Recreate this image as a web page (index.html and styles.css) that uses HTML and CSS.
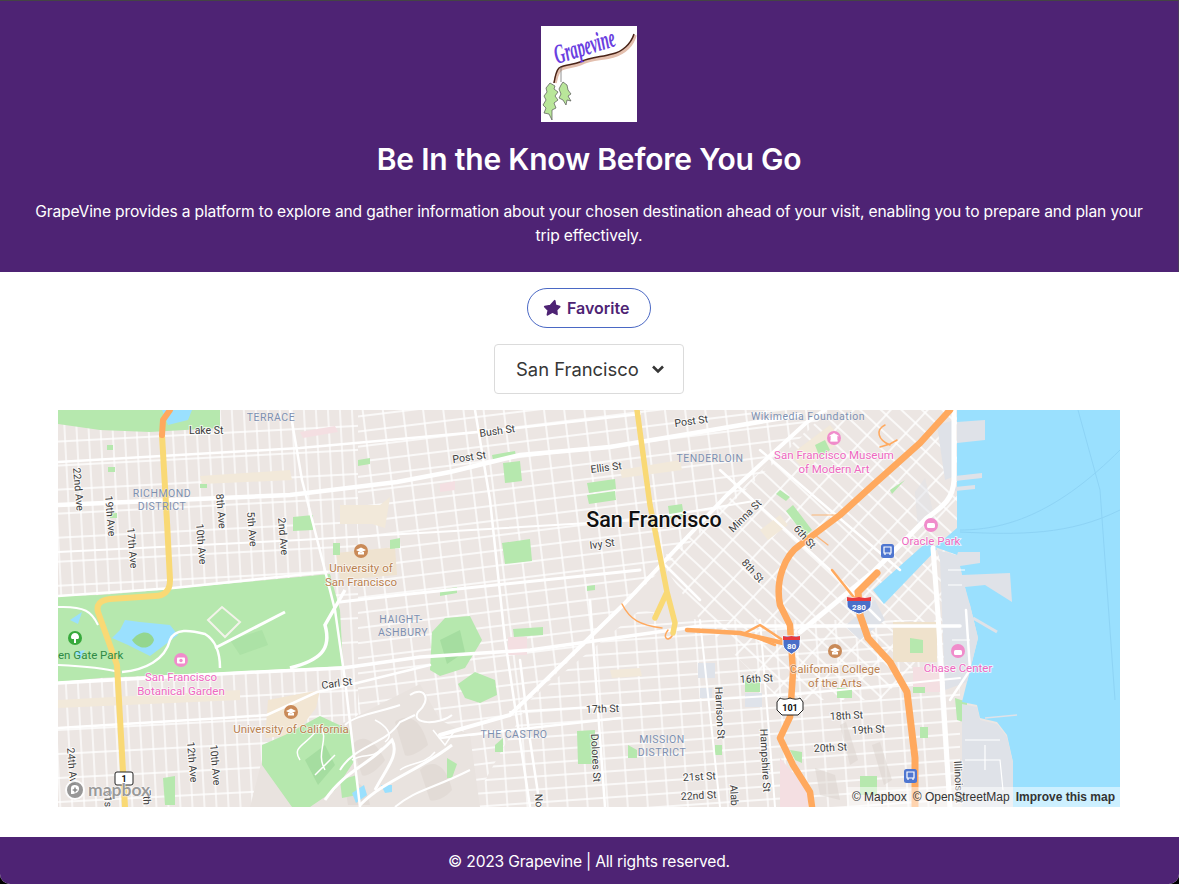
FILE: index.html
```html
<!DOCTYPE html>
<html lang="en">

<head>
    <meta charset="UTF-8">
    <meta name="viewport" content="width=device-width, initial-scale=1.0">
    <title>Grapevine</title>
    <link rel="stylesheet" href="styles.css">
</head>

<body>
    <div class="page">
        <header class="hero">
            <!-- logo -->
            <svg class="logo" viewBox="0 0 96 96" aria-label="Grapevine logo">
                <rect width="96" height="96" fill="#fff" />
                <path d="M94 9C91 20 82 27 72 30C62 33 50 32 39 38C32 41 24 40 19 44C16 47 15 52 14 57" fill="none" stroke="#e3bfae" stroke-width="3.500" />
                <path d="M93 8C90 18 81 26 71 28C61 31 50 31 39 36C32 39 24 38 18 42C15 45 14 51 13 57" fill="none" stroke="#4a2417" stroke-width="1.500" />
                <path d="M20 41V56" fill="none" stroke="#777" stroke-width=".8" />
                <path d="M9 57L14 60L13 63L17 66L14 70L17 74L13 77L15 82L11 84L11 94L8 88L3 87L5 82L2 79L5 74L3 70L6 66L5 62Z" fill="#b9e69a" stroke="#555" stroke-width=".7" />
                <path d="M22 56L26 59L27 64L30 68L27 70L30 75L26 74L25 79L22 74L18 72L20 68L18 63L20 59Z" fill="#b9e69a" stroke="#555" stroke-width=".7" />
                <text class="logo-word" transform="translate(16 38) rotate(-17) scale(.7 1.300)">Grapevine</text>
            </svg>
            <h1 class="hero-title">Be In the Know Before You Go</h1>
            <p class="hero-text">GrapeVine provides a platform to explore and gather information about your chosen destination ahead of your visit, enabling you to prepare and plan your trip effectively.</p>
        </header>

        <main class="content">
            <button class="fav-btn">
                <svg class="fav-icon" viewBox="0 0 20 20">
                    <path d="M13 2L13.800 7L18.500 8.500L15 12L15.500 17L10.500 14.500L5 17.500L6 12.500L2 8.500L8 7.500Z" fill="#4e2374" stroke="#4e2374" stroke-width="2" stroke-linejoin="round" />
                </svg>
                Favorite
            </button>

            <div class="city-select">
                <span>San Francisco</span>
                <svg class="chevron" viewBox="0 0 14 10">
                    <path d="M2 2.500L7 7.500L12 2.500" fill="none" stroke="#363636" stroke-width="2.600" />
                </svg>
            </div>

            <div class="map">
                <svg class="map-svg" viewBox="58 410 1062 397" preserveAspectRatio="none">
                    <defs>
                        <pattern id="grid-west" width="12" height="24" patternUnits="userSpaceOnUse" patternTransform="rotate(-3)">
                            <path d="M6 0V24M0 12H12" stroke="#fff" stroke-width="1.300" />
                        </pattern>
                        <pattern id="grid-mid" width="20" height="15" patternUnits="userSpaceOnUse" patternTransform="rotate(-7)">
                            <path d="M10 0V15M0 7H20" stroke="#fff" stroke-width="1.400" />
                        </pattern>
                        <pattern id="grid-soma" width="27" height="14" patternUnits="userSpaceOnUse" patternTransform="rotate(43)">
                            <path d="M13 0V14M0 7H27" stroke="#fff" stroke-width="1.500" />
                        </pattern>
                        <pattern id="grid-south" width="20" height="13" patternUnits="userSpaceOnUse" patternTransform="rotate(-4)">
                            <path d="M10 0V13M0 6H20" stroke="#fff" stroke-width="1.300" />
                        </pattern>
                    </defs>

                    <!-- land and street texture -->
                    <rect x="58" y="410" width="1062" height="397" fill="#ece6e3" />
                    <rect x="58" y="410" width="300" height="397" fill="url(#grid-west)" />
                    <path d="M358 410H830L640 590L530 700L470 807H358Z" fill="url(#grid-mid)" />
                    <path d="M660 560L830 410H960V620L880 700H780L700 620Z" fill="url(#grid-soma)" />
                    <path d="M470 807L530 700L640 610L700 620H960V807Z" fill="url(#grid-south)" />

                    <!-- hills replace the grid -->
                    <path d="M345 722L420 684L440 720L470 735L480 807H250L262 760Z" fill="#e9e3df" />
                    <g fill="#dcd4ce" opacity=".5">
                        <path d="M352 745C360 735 372 735 385 760C378 770 366 778 362 775Z" />
                        <path d="M395 722C405 714 420 715 428 745C420 752 408 758 405 755Z" />
                        <path d="M420 770C430 760 445 760 452 790C445 798 435 802 430 800Z" />
                        <path d="M345 785C352 778 365 780 370 805H348Z" />
                        <path d="M840 725L846 722L858 760L850 765Z" />
                        <path d="M872 745L880 742L892 780L884 785Z" />
                        <path d="M815 768L835 775L840 800L820 795Z" />
                    </g>

                    <!-- tan blocks -->
                    <g fill="#f2e9da">
                        <path d="M340 505H380L390 497L385 528L372 524H340Z" />
                        <path d="M336 553L395 547L397 575L340 580Z" fill="#efe3d0" />
                        <path d="M200 476L290 470L292 480L202 484Z" />
                        <path d="M268 700L320 690L316 708L295 735L265 738Z" fill="#f2e6d3" />
                        <path d="M58 700L240 690L240 700L58 708Z" />
                        <path d="M620 470L680 460L682 470L622 478Z" />
                        <path d="M893 622H937V662H893Z" fill="#efe2cc" />
                        <path d="M790 455L830 425L842 440L805 470Z" />
                        <path d="M760 530L780 515L788 525L768 540Z" />
                        <path d="M610 670L640 668L642 676L612 678Z" />
                    </g>
                    <g fill="#f4dfe2">
                        <path d="M508 637H527V655H508Z" />
                        <path d="M913 667H940V692H913Z" />
                        <path d="M780 758L808 790V807H780Z" />
                        <path d="M300 432L335 426L338 432L303 438Z" />
                        <path d="M440 484L455 481V490L440 492Z" />
                    </g>
                    <g fill="#dfe3ea">
                        <path d="M698 663H715V678H698Z" />
                        <path d="M745 693H762V707H745Z" />
                        <path d="M700 688H712V698H700Z" />
                    </g>

                    <!-- parks -->
                    <g fill="#b6e8ae">
                        <path d="M58 410H220V428L150 432L100 430L58 424Z" />
                        <path d="M58 596L100 595L160 590L330 574L340 610L343 666L230 672L100 678L58 682Z" />
                        <path d="M285 735L320 716L350 730L355 760L335 790L310 807H292L262 765L262 745Z" />
                        <path d="M432 632L445 618L470 616L482 640L465 668L440 676L430 670Z" />
                        <path d="M458 684L475 672L495 680L497 695L480 703L465 698Z" />
                        <path d="M163 778L175 776V805L165 805Z" />
                        <path d="M340 780L357 775V795L342 798Z" />
                        <path d="M503 463L520 461L522 481L505 483Z" />
                        <path d="M587 483L615 479L616 489L589 493Z" />
                        <path d="M587 495L615 491L616 500L589 504Z" />
                        <path d="M668 506L682 504L684 517L670 519Z" />
                        <path d="M502 543L530 539L532 561L505 564Z" />
                        <path d="M492 455L515 451L516 456L493 460Z" />
                        <path d="M440 590L457 587V593L440 596Z" />
                        <path d="M587 586L595 585V590L587 591Z" />
                        <path d="M293 517L313 515V530L293 531Z" />
                        <path d="M333 543H340V555H333Z" />
                        <path d="M390 540L400 538V548L390 549Z" />
                        <path d="M358 460L370 458V464L358 466Z" />
                        <path d="M107 445H113V450H107Z" />
                        <path d="M108 467H115V472H108Z" />
                        <path d="M200 484H207V488H200Z" />
                        <path d="M110 513H117V518H110Z" />
                        <path d="M577 731L595 730V764H578Z" />
                        <path d="M513 629L543 627V635L514 637Z" />
                        <path d="M495 745L503 738V752H495Z" />
                        <path d="M628 745L637 750V758H628Z" />
                        <path d="M745 680H760V692H745Z" />
                        <path d="M715 745H722V755H715Z" />
                        <path d="M790 750L802 752V763L795 760Z" />
                        <path d="M447 758L457 764L452 778H447Z" />
                        <path d="M910 638L923 640V653H910Z" />
                        <path d="M837 688H852V698H837Z" />
                        <path d="M913 687H925V693H913Z" />
                        <path d="M920 727H928V738H920Z" />
                        <path d="M860 776H877V795H860Z" />
                        <path d="M955 698L967 702V723L957 720Z" />
                        <path d="M793 505L812 530L805 536L786 511Z" />
                        <path d="M780 490L790 497L786 501L776 494Z" />
                        <path d="M815 445L825 440L830 450L820 458Z" />
                        <path d="M890 490L905 480L902 483L892 494Z" />
                    </g>
                    <g fill="#a5dda0">
                        <path d="M305 760L325 745L335 765L318 785Z" />
                        <path d="M440 640L460 630L465 652L447 664Z" />
                        <path d="M230 640L262 630L268 645L240 655Z" opacity=".6" />
                    </g>

                    <!-- water -->
                    <g fill="#9ae0fe">
                        <path d="M957 410H1120V807H1013V762L1007 735L997 722L980 718L977 705L962 702L967 682L978 638L970 605L968 600L957 555L935 547L957 528Z" />
                        <path d="M162 410H192L188 420L168 425Z" />
                        <path d="M125 620L140 622L170 625L178 635L158 650L150 656L128 645L112 638L120 630Z" />
                        <path d="M873 590L928 541L937 549L884 604Z" />
                        <path d="M352 793L364 785L367 795L356 803Z" />
                        <path d="M381 785H392V792L385 793Z" />
                        <path d="M70 620L82 612L78 624Z" />
                        <path d="M75 652L85 650L80 660Z" />
                    </g>
                    <path d="M132 640C142 628 152 632 154 640C152 648 140 652 132 640Z" fill="#94d68f" />
                    <path d="M1078 410L1100 490L1105 560L1115 700M1120 450C1060 510 1010 530 960 530M960 532C1020 535 1070 535 1120 510" fill="none" stroke="#8dd3f5" stroke-width="1" />

                    <!-- piers and port land -->
                    <g fill="#dfe2e8">
                        <path d="M957 422L985 420L985 440L957 443Z" />
                        <path d="M955 476L982 473L982 478L955 481Z" />
                        <path d="M955 487L975 485L975 489L955 491Z" />
                        <path d="M937 425L955 420V476L945 480Z" />
                        <path d="M937 550L957 555L958 552L980 552L980 563L960 566L962 575L1010 573L1012 602L985 585L965 587L970 605L978 638L967 682L945 690L940 560Z" />
                        <path d="M962 704L977 707L980 720L997 724L1007 737L1013 763V807H962Z" />
                        <path d="M915 492L925 478L935 520L918 530Z" opacity=".5" />
                        <path d="M845 626L875 600L885 620L860 640Z" />
                    </g>
                    <path d="M973 618L997 632" stroke="#dfe2e8" stroke-width="3" />
                    <path d="M985 718L1017 715" stroke="#dfe2e8" stroke-width="1.500" />
                    <g fill="none" stroke="#fff" stroke-width="1.200">
                        <path d="M948 570H965M948 585H962M952 640H970" />
                        <path d="M965 740H1000M965 760H1000L1003 790M985 745V770" />
                    </g>

                    <!-- curved hill roads -->
                    <g fill="none" stroke="#fff" stroke-width="2">
                        <path d="M58 607C85 606 92 612 98 625M58 665C80 666 105 668 118 672" />
                        <path d="M122 672C145 670 165 660 170 640C175 628 190 630 205 634C215 640 220 650 220 668" stroke-width="2.500" />
                        <path d="M215 648L285 612" stroke-width="3" />
                        <path d="M290 668C320 660 332 650 325 625L345 590" stroke-width="3.500" />
                        <path d="M345 725C355 715 380 712 400 705M340 770C355 745 385 745 400 722L415 715" />
                        <path d="M325 800C345 770 370 765 392 740C400 755 385 770 375 790" stroke-width="3" />
                        <path d="M360 805C385 780 420 770 452 745" stroke-width="3" />
                        <path d="M395 807C415 790 430 790 470 770" />
                        <path d="M410 695C425 685 432 700 418 712C410 725 440 725 452 715" />
                        <path d="M352 760C365 752 372 760 382 748M400 770C410 762 425 765 435 752M375 720C385 725 395 735 385 742" stroke-width="1.500" />
                        <path d="M300 760C290 745 310 745 320 725C330 740 315 752 325 770M315 775L335 755" stroke-width="1.500" />
                        <path d="M433 730L445 745L455 730" stroke-width="1.500" />
                        <path d="M208 620L222 607L240 622L225 637Z" stroke="#f3f3ea" stroke-width="2" />
                    </g>

                    <!-- main streets -->
                    <g fill="none" stroke="#fff" stroke-linecap="round">
                        <path d="M58 505L290 495L397 482L450 472L520 455L610 447L700 432L800 415" stroke-width="4.500" />
                        <path d="M58 462L300 448L500 430L640 414" stroke-width="2.500" />
                        <path d="M58 552L300 540L640 520L760 500" stroke-width="2" />
                        <path d="M58 596L173 588L327 572" stroke-width="2.500" />
                        <path d="M58 683L237 673L343 668L420 657L530 650L700 626H960" stroke-width="3.500" />
                        <path d="M58 728L223 718L267 715L317 692L357 683L430 665" stroke-width="2.500" />
                        <path d="M340 602L400 595L640 570" stroke-width="3" />
                        <path d="M440 735L510 715L623 605L727 495L807 422L825 410" stroke-width="4" />
                        <path d="M510 712L800 694L960 678" stroke-width="2" />
                        <path d="M440 738L620 718" stroke-width="2.500" />
                        <path d="M290 410L302 480L335 610L345 680L360 807" stroke-width="2.500" />
                        <path d="M475 410L490 500L505 640L530 807" stroke-width="2.500" />
                        <path d="M590 600L605 807" stroke-width="2.500" />
                        <path d="M520 660L530 740L540 807" stroke-width="2.500" />
                        <path d="M700 620L720 807" stroke-width="2" />
                        <path d="M760 620L775 807" stroke-width="2" />
                        <path d="M954 410V480C953 498 945 505 927 518L873 572L800 632" stroke-width="5" />
                        <path d="M933 548L938 615L950 807" stroke-width="5" />
                        <path d="M966 610L970 670L950 700" stroke-width="2.500" />
                        <path d="M720 470L830 570L880 620M660 560L700 600M760 450L900 570" stroke-width="2.500" />
                    </g>

                    <!-- highways -->
                    <g fill="none" stroke-linecap="round" stroke-linejoin="round">
                        <path d="M162 435L167 522L170 580C170 592 163 596 155 596L110 599C100 600 96 605 98 612L117 665L125 807" stroke="#f9d975" stroke-width="6" />
                        <path d="M637 410L650 505L667 592L655 618M667 592L675 623L673 633" stroke="#f9d975" stroke-width="5.500" />
                        <path d="M162 435L163 420L170 410" stroke="#ffa95e" stroke-width="6" />
                        <path d="M950 410L920 443L873 485L840 515L800 545C785 555 775 580 780 605L790 625L793 672L790 717L780 738L793 765L810 792L812 807" stroke="#ffa95e" stroke-width="6.500" />
                        <path d="M687 630L740 633L783 643" stroke="#ffa95e" stroke-width="4.500" />
                        <path d="M745 633L760 625L790 645M755 637L775 645" stroke="#ffa95e" stroke-width="2.500" />
                        <path d="M877 573L858 592L860 615L868 638L890 662L907 692L915 758V807" stroke="#ffa95e" stroke-width="7" />
                        <path d="M832 570L856 600" stroke="#ffa95e" stroke-width="2.500" />
                        <path d="M622 604C630 620 640 625 662 628" stroke="#ffa95e" stroke-width="1.500" />
                        <path d="M668 630C662 638 668 642 672 636" stroke="#ffa95e" stroke-width="1.500" />
                        <path d="M880 447L890 444L897 440M885 425C875 430 878 440 890 445" stroke="#ffa95e" stroke-width="1.500" />
                        <path d="M828 545L815 535M812 515L840 515" stroke="#ffa95e" stroke-width="1.200" opacity=".8" />
                    </g>

                    <!-- area labels -->
                    <g class="lbl-area">
                        <text x="271" y="421" text-anchor="middle">TERRACE</text>
                        <text x="162" y="497" text-anchor="middle">RICHMOND</text>
                        <text x="162" y="510" text-anchor="middle">DISTRICT</text>
                        <text x="401" y="623" text-anchor="middle">HAIGHT-</text>
                        <text x="403" y="636" text-anchor="middle">ASHBURY</text>
                        <text x="710" y="462" text-anchor="middle">TENDERLOIN</text>
                        <text x="514" y="738" text-anchor="middle">THE CASTRO</text>
                        <text x="662" y="743" text-anchor="middle">MISSION</text>
                        <text x="662" y="756" text-anchor="middle">DISTRICT</text>
                        <text x="808" y="420" text-anchor="middle">Wikimedia Foundation</text>
                    </g>

                    <!-- street labels -->
                    <g class="lbl-street">
                        <text transform="translate(189 434)">Lake St</text>
                        <text transform="translate(480 437) rotate(-8)">Bush St</text>
                        <text transform="translate(453 463) rotate(-8)">Post St</text>
                        <text transform="translate(675 427) rotate(-8)">Post St</text>
                        <text transform="translate(591 473) rotate(-7)">Ellis St</text>
                        <text transform="translate(590 549) rotate(-7)">Ivy St</text>
                        <text transform="translate(733 533) rotate(-45)">Minna St</text>
                        <text transform="translate(793 529) rotate(48)">6th St</text>
                        <text transform="translate(741 563) rotate(48)">8th St</text>
                        <text transform="translate(73 468) rotate(85)">22nd Ave</text>
                        <text transform="translate(105 496) rotate(85)">19th Ave</text>
                        <text transform="translate(127 528) rotate(85)">17th Ave</text>
                        <text transform="translate(196 524) rotate(85)">10th Ave</text>
                        <text transform="translate(216 494) rotate(85)">8th Ave</text>
                        <text transform="translate(247 512) rotate(85)">5th Ave</text>
                        <text transform="translate(278 518) rotate(85)">2nd Ave</text>
                        <text transform="translate(322 689) rotate(-8)">Carl St</text>
                        <text transform="translate(67 748) rotate(85)">24th Ave</text>
                        <text transform="translate(187 742) rotate(85)">12th Ave</text>
                        <text transform="translate(210 745) rotate(85)">10th Ave</text>
                        <text transform="translate(586 713) rotate(-2)">17th St</text>
                        <text transform="translate(591 734) rotate(87)">Dolores St</text>
                        <text transform="translate(715 687) rotate(87)">Harrison St</text>
                        <text transform="translate(760 729) rotate(87)">Hampshire St</text>
                        <text transform="translate(740 683) rotate(-3)">16th St</text>
                        <text transform="translate(830 720) rotate(-3)">18th St</text>
                        <text transform="translate(852 734) rotate(-3)">19th St</text>
                        <text transform="translate(814 752) rotate(-3)">20th St</text>
                        <text transform="translate(683 781) rotate(-3)">21st St</text>
                        <text transform="translate(681 800) rotate(-3)">22nd St</text>
                        <text transform="translate(535 794) rotate(87)">No</text>
                        <text transform="translate(730 785) rotate(87)">Alab</text>
                        <text transform="translate(954 761) rotate(87)">Illinois St</text>
                        <text transform="translate(104 790) rotate(88)">21s</text>
                        <text transform="translate(143 790) rotate(88)">7th</text>
                    </g>

                    <text class="lbl-city" x="654" y="527" text-anchor="middle">San Francisco</text>

                    <!-- pink pois -->
                    <g class="lbl-pink">
                        <text x="834" y="459" text-anchor="middle">San Francisco Museum</text>
                        <text x="834" y="473" text-anchor="middle">of Modern Art</text>
                        <text x="931" y="545" text-anchor="middle">Oracle Park</text>
                        <text x="958" y="672" text-anchor="middle">Chase Center</text>
                        <text x="181" y="681" text-anchor="middle">San Francisco</text>
                        <text x="181" y="695" text-anchor="middle">Botanical Garden</text>
                    </g>
                    <g class="lbl-brown">
                        <text x="361" y="572" text-anchor="middle">University of</text>
                        <text x="361" y="586" text-anchor="middle">San Francisco</text>
                        <text x="291" y="733" text-anchor="middle">University of California</text>
                        <text x="835" y="673" text-anchor="middle">California College</text>
                        <text x="835" y="687" text-anchor="middle">of the Arts</text>
                    </g>
                    <text class="lbl-park" x="58" y="659">en Gate Park</text>

                    <!-- poi icons -->
                    <g>
                        <circle cx="834" cy="438" r="7" fill="#f08ccb" />
                        <path d="M830 441H838M831 436H837V441H831ZM829.500 436L834 433.500L838.500 436" fill="#fff" stroke="#fff" stroke-width=".8" />
                        <circle cx="931" cy="525" r="7" fill="#f08ccb" />
                        <rect x="927" y="523" width="8" height="5" rx="1.500" fill="#fff" />
                        <circle cx="958" cy="651" r="7" fill="#f08ccb" />
                        <rect x="954" y="650" width="8" height="5" rx="1.500" fill="#fff" />
                        <circle cx="181" cy="660" r="7" fill="#f08ccb" />
                        <rect x="177" y="657.500" width="8" height="6" rx="1" fill="#fff" />
                        <circle cx="181" cy="660.500" r="1.700" fill="#f08ccb" />
                        <circle cx="361" cy="551" r="7" fill="#c98a58" />
                        <path d="M356 550L361 547.500L366 550L361 552.500ZM358 552V554.500H364V552" fill="#fff" />
                        <circle cx="291" cy="712" r="7" fill="#c98a58" />
                        <path d="M286 711L291 708.500L296 711L291 713.500ZM288 713V715.500H294V713" fill="#fff" />
                        <circle cx="835" cy="651" r="7" fill="#c98a58" />
                        <path d="M830 650L835 647.500L840 650L835 652.500ZM832 652V654.500H838V652" fill="#fff" />
                        <circle cx="75" cy="638" r="7" fill="#37a93c" />
                        <path d="M75 633C79 633 80 638 78 639H76V643H74V639H72C70 638 71 633 75 633Z" fill="#fff" />
                        <rect x="881" y="544" width="13" height="14" rx="2.500" fill="#4f76d0" />
                        <path d="M884 547H891V553H884ZM885 553V555M890 553V555" fill="none" stroke="#fff" stroke-width="1.200" />
                        <rect x="904" y="769" width="13" height="14" rx="2.500" fill="#4f76d0" />
                        <path d="M907 772H914V778H907ZM908 778V780M913 778V780" fill="none" stroke="#fff" stroke-width="1.200" />
                    </g>

                    <!-- highway shields -->
                    <g>
                        <path d="M783 636H800V644C800 649 795 652 791.500 654C788 652 783 649 783 644Z" fill="#4a6fc8" stroke="#fff" stroke-width="1" />
                        <path d="M783 636L787 637L791.500 636L796 637L800 636V640H783Z" fill="#e8383d" />
                        <text class="lbl-shield" x="791.500" y="649" text-anchor="middle">80</text>
                        <path d="M847 598H871V605C871 609 865 612 859 614C853 612 847 609 847 605Z" fill="#4a6fc8" stroke="#fff" stroke-width="1" />
                        <path d="M847 597L853 598L859 597L865 598L871 597V601H847Z" fill="#e8383d" />
                        <text class="lbl-shield" x="859" y="610" text-anchor="middle">280</text>
                        <path d="M780 698C784 700 787 699 790 698C793 699 797 700 800 698L803 702V710L798 715H782L777 710V702Z" fill="#fff" stroke="#222" stroke-width="1" />
                        <text class="lbl-shield-dark" x="790" y="711" text-anchor="middle">101</text>
                        <rect x="115" y="772" width="18" height="13" rx="2" fill="#fff" stroke="#222" stroke-width="1" />
                        <text class="lbl-shield-dark" x="124" y="782" text-anchor="middle">1</text>
                    </g>
                </svg>

                <!-- mapbox badge + attribution -->
                <div class="mapbox-logo">
                    <svg class="mapbox-mark" viewBox="0 0 22 22">
                        <circle cx="11" cy="11" r="9" fill="#8f8f8f" stroke="#fff" stroke-width="2" opacity=".9" />
                        <path d="M7 15V9C7 6 11 5 14 7C16 9 15 13 12 14C10 15 8 15 7 15Z" fill="#fff" />
                        <path d="M11 7.500L12 10L14 11L12 12L11 14L10 12L8 11L10 10Z" fill="#8f8f8f" />
                    </svg>
                    <span>mapbox</span>
                </div>
                <div class="attrib">
                    <span>© Mapbox</span>
                    <span>© OpenStreetMap</span>
                    <strong>Improve this map</strong>
                </div>
            </div>
        </main>

        <footer class="foot">© 2023 Grapevine | All rights reserved.</footer>
    </div>
</body>

</html>
```

FILE: styles.css
```css
:root {
    --purple: #4e2374;
}

html,
body {
    height: 100%;
    margin: 0;
    background-color: #000;
}

body {
    font-family: 'Inter', 'Liberation Sans', sans-serif;
    color: #fff;
}

.page {
    height: 884px;
    display: flex;
    flex-direction: column;
    overflow: hidden;
    border-radius: 0 0 10px 10px;
    background-color: #fff;
}

/* Header */
.hero {
    height: 246px;
    border-top: 1px solid #444;
    border-right: 1px solid #4a3a5c;
    padding-top: 25px;
    background-color: var(--purple);
    text-align: center;
}

.logo {
    display: block;
    width: 96px;
    height: 96px;
    margin: 0 auto;
}

.logo-word {
    font-family: 'Liberation Serif', serif;
    font-style: italic;
    font-weight: 700;
    font-size: 21px;
    fill: #6a3fe0;
}

.hero-title {
    margin: 19px 0 0;
    font-size: 30px;
    font-weight: 600;
    letter-spacing: -0.2px;
    line-height: 36px;
}

.hero-text {
    margin: 23px 34px 0;
    font-size: 15.6px;
    letter-spacing: -0.15px;
    line-height: 24px;
}

/* Favorite + select */
.content {
    flex: 1;
    display: flex;
    flex-direction: column;
    align-items: center;
    padding: 16px 1px 0 0;
}

.fav-btn {
    display: flex;
    align-items: center;
    gap: 6px;
    box-sizing: border-box;
    width: 124px;
    height: 40px;
    padding: 0 0 0 15px;
    border: 1px solid #4a68c4;
    border-radius: 20px;
    background-color: #fff;
    color: var(--purple);
    font-family: inherit;
    font-size: 16px;
    font-weight: 600;
}

.fav-icon {
    width: 18px;
    height: 18px;
}

.city-select {
    display: flex;
    align-items: center;
    justify-content: space-between;
    box-sizing: border-box;
    width: 190px;
    height: 50px;
    margin-top: 16px;
    padding: 0 18px 0 21px;
    border: 1px solid #dbdbdb;
    border-radius: 4px;
    color: #363636;
    font-size: 18.4px;
}

.chevron {
    width: 14px;
    height: 10px;
}

/* Map */
.map {
    position: relative;
    width: 1062px;
    height: 397px;
    margin-top: 16px;
    overflow: hidden;
}

.map-svg {
    display: block;
    width: 100%;
    height: 100%;
}

.map-svg text {
    font-family: 'Roboto', 'Liberation Sans', sans-serif;
}

.lbl-area {
    font-size: 10.5px;
    letter-spacing: 0.5px;
    fill: #7c8fb0;
    stroke: #fff;
    stroke-width: 0.3px;
    paint-order: stroke;
}

.lbl-street {
    font-size: 10.5px;
    fill: #3d3d3d;
    stroke: #fff;
    stroke-width: 2px;
    stroke-opacity: 0.7;
    paint-order: stroke;
}

.map-svg .lbl-city {
    font-size: 21.5px;
    font-weight: 500;
    fill: #111;
    stroke: #fff;
    stroke-width: 2px;
    stroke-opacity: 0.7;
    paint-order: stroke;
}

.lbl-pink {
    font-size: 11.5px;
    fill: #ee68c0;
    stroke: #fff;
    stroke-width: 1.5px;
    stroke-opacity: 0.8;
    paint-order: stroke;
}

.lbl-brown {
    font-size: 11.5px;
    fill: #b9804f;
    stroke: #fff;
    stroke-width: 1.5px;
    stroke-opacity: 0.7;
    paint-order: stroke;
}

.lbl-park {
    font-size: 11.5px;
    fill: #2f8a45;
}

.lbl-shield {
    font-size: 8px;
    font-weight: 700;
    fill: #fff;
}

.lbl-shield-dark {
    font-size: 9px;
    font-weight: 700;
    fill: #111;
}

.mapbox-logo {
    position: absolute;
    left: 6px;
    bottom: 6px;
    display: flex;
    align-items: center;
    gap: 2px;
    color: #9a9a9a;
    font-family: 'Lato', 'Liberation Sans', sans-serif;
    font-size: 17.5px;
    font-weight: 700;
    line-height: 20px;
    text-shadow: 0 0 1px #fff, 0 0 1px #fff, 0 0 2px #fff;
}

.mapbox-mark {
    width: 22px;
    height: 22px;
}

.attrib {
    position: absolute;
    right: 0;
    bottom: 0;
    display: flex;
    gap: 6px;
    padding: 0 5px;
    background-color: rgba(255, 255, 255, 0.5);
    color: #333;
    font-family: 'Liberation Sans', sans-serif;
    font-size: 12px;
    line-height: 20px;
}

/* Footer */
.foot {
    height: 47px;
    padding-right: 1px;
    background-color: var(--purple);
    font-size: 15.6px;
    letter-spacing: -0.2px;
    line-height: 49px;
    text-align: center;
}
```
